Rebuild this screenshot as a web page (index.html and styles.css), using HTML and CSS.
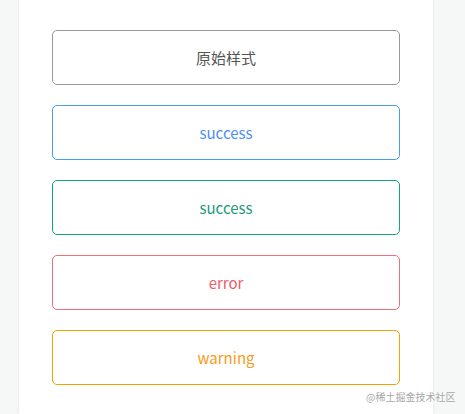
FILE: index.html
```html
<!DOCTYPE html>
<html lang="zh">
<head>
<meta charset="utf-8">
<link rel="stylesheet" href="styles.css">
</head>
<body>
<div class="page">
  <div class="card">
    <div class="btn btn-default">原始样式</div>
    <div class="btn btn-primary">success</div>
    <div class="btn btn-success">success</div>
    <div class="btn btn-error">error</div>
    <div class="btn btn-warning">warning</div>
  </div>
</div>
<div class="watermark">@稀土掘金技术社区</div>
</body>
</html>
```

FILE: styles.css
```css
html, body {
  margin: 0;
  padding: 0;
  height: 100%;
  background: #f6f7f7;
  font-family: "Noto Sans CJK SC", "Noto Sans", sans-serif;
  overflow: hidden;
}
.page {
  padding-left: 19px;
  height: 100%;
}
.card {
  width: 414px;
  height: 100%;
  background: #ffffff;
  box-shadow: 0 0 3px rgba(0, 0, 0, 0.08);
  box-sizing: border-box;
  padding: 30px 0 0 33px;
  display: flex;
  flex-direction: column;
  gap: 20px;
}
.btn {
  width: 348px;
  height: 55px;
  box-sizing: border-box;
  border: 1px solid #999999;
  border-radius: 5px;
  display: flex;
  align-items: center;
  justify-content: center;
  font-size: 15px;
  color: #555555;
  padding-bottom: 1px;
}
.btn-primary { border-color: #4a9bf2; color: #4e8ff5; }
.btn-success { border-color: #12a67f; color: #1a9a78; }
.btn-error { border-color: #ef6f7a; color: #f05b6b; }
.btn-warning { border-color: #f5a100; color: #f79a20; }
.watermark {
  position: absolute;
  left: 366px;
  top: 390px;
  font-size: 10px;
  line-height: 14px;
  color: #a8a8a8;
  white-space: nowrap;
}
```
